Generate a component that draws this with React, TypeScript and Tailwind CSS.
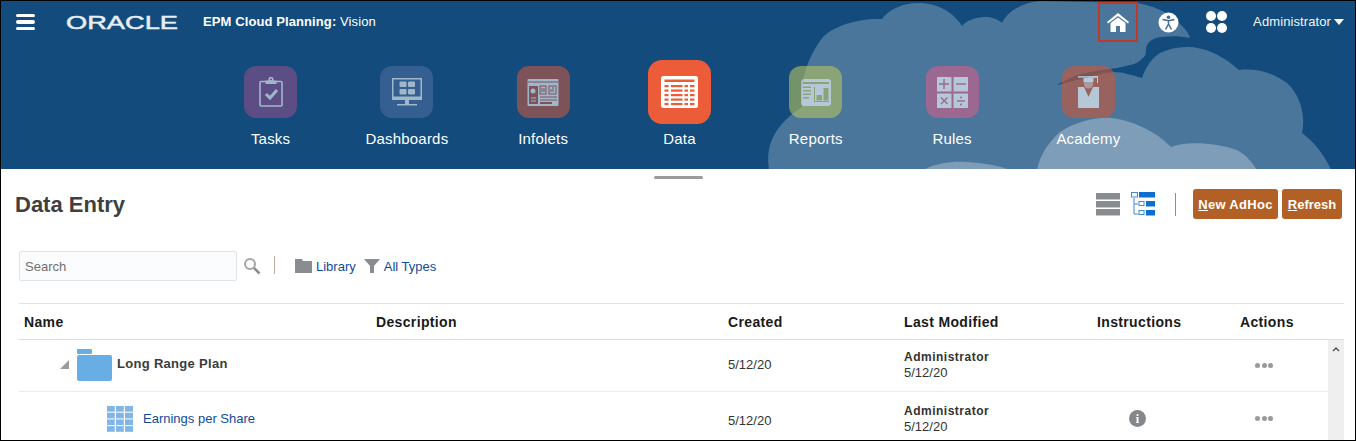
import React from 'react';

const FONT = 'font-["Liberation_Sans",Arial,sans-serif]';

function Clouds() {
  return (
    <svg className="absolute inset-0" width="1354" height="168" viewBox="1 1 1354 168" aria-hidden="true">
      <path
        fill="#4a769c"
        d="M769 170C766 150 770 128 802 107C800 85 805 60 823 37C835 25 860 18 882 19C888 10 902 3 918 3C935 3 952 10 962 26C968 18 990 12 1002 23C1008 10 1025 2 1040 1L1137 3C1150 5 1170 12 1180 24C1185 29 1189 33 1190 38C1180 36 1170 36 1161 37C1152 38 1146 43 1146 50C1146 54 1145 56 1144 57C1140 61 1136 64 1130 65C1125 66 1122 67 1117 68C1100 70 1088 72 1077 75C1070 78 1062 82 1057 85C1065 83 1072 81 1082 79C1092 76 1103 73 1113 72C1122 72 1132 75 1142 78C1146 66 1152 58 1160 53C1168 49 1177 47 1187 47C1202 47 1220 53 1239 70C1255 68 1272 72 1287 83C1300 95 1306 115 1302 133C1312 140 1325 155 1331 170Z"
      />
      <path
        fill="#7d9db8"
        d="M1037 170C1040 155 1048 143 1060 132C1075 122 1095 117 1111 118C1130 120 1155 130 1171 147C1185 141 1215 142 1237 150C1246 155 1252 162 1257 170Z"
      />
      <path fill="#7d9db8" d="M923 170C935 164 950 161 967 162C985 163 1000 166 1010 170Z" />
    </svg>
  );
}

function TasksIcon() {
  return (
    <svg width="24" height="30" viewBox="0 0 24 30" fill="none" stroke="#fff" strokeWidth="1.6">
      <rect x="1" y="4.500" width="22" height="24.500" rx="1" />
      <circle cx="12" cy="2.500" r="1.800" />
      <rect x="6.500" y="3.500" width="11" height="3.500" fill="#fff" stroke="none" />
      <path d="M7 17l4 4 7-8" strokeWidth="3" />
    </svg>
  );
}

function DashboardsIcon() {
  return (
    <svg width="32" height="29" viewBox="0 0 32 29" fill="#fff">
      <path d="M1 0h30v22H1zM2.500 1.500v17h27v-17z" fillRule="evenodd" />
      <rect x="8.500" y="3.500" width="7" height="5.500" rx="1" />
      <rect x="17" y="3.500" width="7" height="5.500" rx="1" />
      <rect x="8.500" y="11" width="7" height="5.500" rx="1" />
      <rect x="17" y="11" width="7" height="5.500" rx="1" />
      <rect x="14" y="22" width="4" height="4" />
      <rect x="6" y="26" width="20" height="1.500" />
    </svg>
  );
}

function InfoletsIcon() {
  const cut = '#c45643';
  return (
    <svg width="32" height="27" viewBox="0 0 32 27">
      <rect x="0.500" y="0" width="31" height="27" rx="1" fill="#fff" />
      <rect x="0.500" y="2.500" width="31" height="1" fill={cut} />
      <rect x="2" y="7" width="9" height="18" fill={cut} />
      <rect x="13" y="7" width="6" height="8" fill="none" stroke={cut} />
      <rect x="22" y="7" width="7" height="8" fill="none" stroke={cut} />
      <path d="M14 10h4M14 12h4" stroke={cut} />
      <path d="M24 13v-3M26 13v-5" stroke={cut} />
      <circle cx="6" cy="12" r="2.500" fill="#fff" />
      <path d="M4 19h5M4 22h5" stroke="#fff" />
      <path d="M13 18h17M13 21h17" stroke={cut} />
      <path d="M13 24h12" stroke={cut} strokeWidth="2" />
    </svg>
  );
}

function DataIcon() {
  return (
    <svg width="37" height="32" viewBox="0 0 37 32">
      <rect width="37" height="32" rx="2.500" fill="#fff" />
      <g fill="#ec5c39">
        <rect x="3.500" y="3.500" width="30" height="2.500" />
        {[9, 13.500, 18, 22.500, 27].map((y) => (
          <React.Fragment key={y}>
            <rect x="3.500" y={y} width="4" height="2.200" />
            <rect x="10" y={y} width="11.500" height="2.200" />
            <rect x="23.500" y={y} width="3.500" height="2.200" />
            <rect x="29" y={y} width="4.500" height="2.200" />
          </React.Fragment>
        ))}
      </g>
    </svg>
  );
}

function ReportsIcon() {
  return (
    <svg width="30" height="27" viewBox="0 0 30 27">
      <rect width="30" height="27" rx="3" fill="#fff" />
      <g fill="#b6c35f">
        <rect x="2" y="3" width="26" height="2" />
        <rect x="2" y="7.500" width="8" height="1.500" />
        <rect x="2" y="11" width="8" height="1.500" />
        <rect x="2" y="14.500" width="8" height="1.500" />
        <rect x="2" y="18" width="6" height="1.500" />
        <rect x="13" y="8" width="1" height="15" />
        <rect x="13" y="22" width="15" height="1" />
        <rect x="15.500" y="16" width="5.500" height="5.500" />
        <rect x="22.500" y="9" width="5" height="12.500" />
      </g>
    </svg>
  );
}

function RulesIcon() {
  const cut = '#cf5f89';
  return (
    <svg width="31" height="31" viewBox="0 0 31 31">
      <g fill="#fff">
        <rect width="14.500" height="14.500" />
        <rect x="16.500" width="14.500" height="14.500" />
        <rect y="16.500" width="14.500" height="14.500" />
        <rect x="16.500" y="16.500" width="14.500" height="14.500" />
      </g>
      <g stroke={cut} strokeWidth="1.400" fill={cut}>
        <path d="M2 7h10M7 2v10" />
        <path d="M19 7h10" />
        <path d="M4 20.500l6.500 6.500M10.500 20.500l-6.500 6.500" />
        <path d="M20 24h8" />
        <circle cx="24" cy="20.500" r="0.400" />
        <circle cx="24" cy="27.500" r="0.400" />
      </g>
    </svg>
  );
}

function AcademyIcon() {
  return (
    <svg width="21" height="32" viewBox="0 0 21 32">
      <rect x="0" y="0" width="20" height="1.800" fill="#fff" />
      <rect x="19" y="1" width="1" height="6" fill="#fff" />
      <path d="M5.500 1.800h10V6h-10Z" fill="#fff" />
      <path d="M6 6h9v2a4.500 4.500 0 0 1-9 0Z" fill="#fff" opacity="0.55" />
      <path d="M0 11h6l4.500 10L15 11h6v21H0Z" fill="#fff" />
    </svg>
  );
}

const NAV = [
  { label: 'Tasks', tile: 'bg-[#8e4e8b]', icon: <TasksIcon /> },
  { label: 'Dashboards', tile: 'bg-[#4c6c9f]', icon: <DashboardsIcon /> },
  { label: 'Infolets', tile: 'bg-[#c45643]', icon: <InfoletsIcon /> },
  { label: 'Data', tile: 'bg-[#ec5c39]', icon: <DataIcon />, active: true },
  { label: 'Reports', tile: 'bg-[#b6c35f]', icon: <ReportsIcon /> },
  { label: 'Rules', tile: 'bg-[#cf5f89]', icon: <RulesIcon /> },
  { label: 'Academy', tile: 'bg-[#cd5837]', icon: <AcademyIcon /> },
];

function NavItem({ label, tile, icon, active }: { label: string; tile: string; icon: React.ReactNode; active?: boolean }) {
  return (
    <div className="w-[136.3px] flex flex-col items-center">
      <div className="h-[64px] flex items-center justify-center">
        <div
          className={`flex items-center justify-center ${tile} ${
            active ? 'w-[63px] h-[64px] rounded-[14px]' : 'w-[53px] h-[52px] rounded-[12px] opacity-60'
          }`}
        >
          {icon}
        </div>
      </div>
      <div className="mt-[6px] text-[15px] leading-[18px] tracking-[0.2px] text-white">{label}</div>
    </div>
  );
}

function TopBar() {
  return (
    <div className="relative h-[42px] flex items-center text-white">
      <div className="ml-[15px] w-[19px] flex flex-col gap-[3px]">
        <div className="h-[3.5px] bg-white rounded-sm" />
        <div className="h-[3.5px] bg-white rounded-sm" />
        <div className="h-[3.5px] bg-white rounded-sm" />
      </div>
      <svg className="ml-[31px]" width="114" height="18" viewBox="0 0 114 18" aria-label="ORACLE">
        <text
          x="0"
          y="15.500"
          textLength="112"
          lengthAdjust="spacingAndGlyphs"
          fill="#e8eef3"
          stroke="#e8eef3"
          strokeWidth="0.5"
          fontFamily="Liberation Sans, Arial, sans-serif"
          fontSize="19"
        >
          ORACLE
        </text>
      </svg>
      <div className="ml-[23px] text-[13px] tracking-[0.1px]">
        <span className="font-bold">EPM Cloud Planning:</span> Vision
      </div>
      <div className="ml-auto flex items-center">
        <div className="w-[40px] h-[40px] border-2 border-[#c0392b] flex items-center justify-center">
          <svg width="22" height="19" viewBox="0 0 22 19" fill="#fff">
            <path d="M11 0L22 9l-1 1.500L11 3 1 10.500 0 9Z" />
            <path d="M3.500 10L11 4.500 18.500 10V19H13v-6H9v6H3.500Z" />
          </svg>
        </div>
        <svg className="ml-[20px]" width="21" height="21" viewBox="0 0 21 21">
          <circle cx="10.500" cy="10.500" r="10" fill="#fff" />
          <circle cx="10.500" cy="5.200" r="1.800" fill="#3f6d94" />
          <path
            d="M4.500 7.500l6 1.200 6-1.200M10.500 8.700v4M10.500 12l-3 5.500M10.500 12l3 5.500"
            stroke="#3f6d94"
            strokeWidth="1.500"
            fill="none"
          />
        </svg>
        <div className="ml-[27px] grid grid-cols-2 gap-x-[1.5px] gap-y-[2px]">
          <div className="w-[10px] h-[10px] rounded-full bg-white" />
          <div className="w-[10px] h-[10px] rounded-full bg-white" />
          <div className="w-[10px] h-[10px] rounded-full bg-white" />
          <div className="w-[10px] h-[10px] rounded-full bg-white" />
        </div>
        <div className="ml-[26px] text-[13px] tracking-[0.1px] text-[#f2f5f8]">Administrator</div>
        <div className="ml-[3px] mr-[11px] w-0 h-0 border-x-[5.5px] border-x-transparent border-t-[6px] border-t-white" />
      </div>
    </div>
  );
}

function Header() {
  return (
    <div className="relative h-[168px] shrink-0 bg-[#134c7c] overflow-hidden">
      <Clouds />
      <TopBar />
      <div className="relative flex justify-center pt-[17px] ml-[3px]">
        {NAV.map((n) => (
          <NavItem key={n.label} {...n} />
        ))}
      </div>
    </div>
  );
}

function Toolbar() {
  return (
    <div className="flex items-center shrink-0 h-[70px] mb-[12px] pl-[14px] pr-[13px]">
      <h1 className="text-[22px] font-bold text-[#3f3f3f] leading-none mt-[2px]">Data Entry</h1>
      <div className="ml-auto flex items-center">
        <svg width="24" height="23" viewBox="0 0 24 23" fill="#8a8d90">
          <rect width="24" height="6.500" />
          <rect y="8" width="24" height="6.500" />
          <rect y="16" width="24" height="6.500" />
        </svg>
        <svg className="ml-[11px]" width="24" height="24" viewBox="0 0 24 24">
          <path d="M3 6v16h4M3 12h4" stroke="#3f8ad8" fill="none" />
          <rect x="0.500" y="0.500" width="6" height="4.500" fill="#fff" stroke="#3f8ad8" />
          <rect x="8" y="0" width="16" height="5.500" fill="#0f6fd0" />
          <rect x="8" y="9.500" width="5" height="4" fill="#fff" stroke="#3f8ad8" />
          <rect x="15" y="9" width="9" height="5.500" fill="#0f6fd0" />
          <rect x="8" y="18.500" width="5" height="4" fill="#fff" stroke="#3f8ad8" />
          <rect x="15" y="18" width="9" height="5.500" fill="#0f6fd0" />
        </svg>
        <div className="ml-[20px] w-px h-[23px] bg-[#8a8d90]" />
        <button className="ml-[17px] pt-[1px] h-[30px] w-[85px] rounded-[3px] bg-[#b26025] text-white text-[13px] font-bold tracking-[0.3px]">
          <span className="underline">N</span>ew AdHoc
        </button>
        <button className="ml-[4px] pt-[1px] h-[30px] w-[60px] rounded-[3px] bg-[#b26025] text-white text-[13px] font-bold">
          <span className="underline">R</span>efresh
        </button>
      </div>
    </div>
  );
}

function SearchBar() {
  return (
    <div className="flex items-center shrink-0 h-[30px] pl-[18px]">
      <div className="w-[218px] h-[30px] flex items-center pl-[5px] pt-[2px] border border-[#dfe4ea] rounded-[2px] bg-[#fbfcfd] text-[13px] text-[#6f6f6f]">
        Search
      </div>
      <svg className="ml-[6px]" width="18" height="18" viewBox="0 0 18 18" fill="none">
        <circle cx="7" cy="7" r="5" stroke="#a3a5a7" strokeWidth="2" />
        <path d="M11 11l5.500 5.500" stroke="#8a8d90" strokeWidth="2.500" />
      </svg>
      <div className="ml-[13px] -mt-[3px] w-px h-[18px] bg-[#b5ad9a]" />
      <svg className="ml-[20px]" width="17" height="14" viewBox="0 0 17 14" fill="#8a8d90">
        <path d="M0 0h7l1 2h9v12H0Z" />
      </svg>
      <span className="ml-[4px] mt-[1px] text-[13px] text-[#0f4c97]">Library</span>
      <svg className="ml-[8px]" width="16" height="14" viewBox="0 0 16 14" fill="#8a8d90">
        <path d="M0 0h16l-6 7v7H6V7Z" />
      </svg>
      <span className="ml-[4px] mt-[1px] text-[13px] text-[#0f4c97]">All Types</span>
    </div>
  );
}

const COLS = 'grid grid-cols-[352px_352px_176px_193px_143px_1fr]';

function MoreDots() {
  return (
    <div className="flex gap-[1.5px] pl-[15px]">
      <div className="w-[5px] h-[5px] rounded-full bg-[#97999b]" />
      <div className="w-[5px] h-[5px] rounded-full bg-[#97999b]" />
      <div className="w-[5px] h-[5px] rounded-full bg-[#97999b]" />
    </div>
  );
}

function Modified({ className }: { className: string }) {
  return (
    <div className={`text-[13px] leading-[16px] text-[#333] ${className}`}>
      <div className="text-[12px] font-bold tracking-[0.5px]">Administrator</div>
      <div>5/12/20</div>
    </div>
  );
}

function FileTable() {
  return (
    <div className="shrink-0 mt-[22px] ml-[18px] w-[1325px] border-t border-[#dde3ea]">
      <div className={`${COLS} h-[36px] items-center pl-[5px] pt-[2px] text-[14px] font-bold tracking-[0.35px] text-[#1a1a1a] border-b border-[#d5dde6]`}>
        <div>Name</div>
        <div>Description</div>
        <div>Created</div>
        <div>Last Modified</div>
        <div>Instructions</div>
        <div>Actions</div>
      </div>
      <div className="flex">
        <div className="flex-1">
          <div className={`${COLS} h-[52px] items-center pl-[5px] border-b border-[#e8ebef]`}>
            <div className="flex items-center">
              <div className="ml-[36px] -mt-[3px] w-0 h-0 border-l-[9px] border-l-transparent border-b-[9px] border-b-[#9a9c9e]" />
              <svg className="ml-[8px] -mt-[1px]" width="35" height="32" viewBox="0 0 35 32" fill="#68ade4">
                <rect width="15" height="5" rx="1" />
                <rect y="6" width="35" height="26" rx="2" />
              </svg>
              <span className="ml-[5px] -mt-[3px] text-[13px] font-bold tracking-[0.3px] text-[#3c3c3c]">Long Range Plan</span>
            </div>
            <div />
            <div className="-mt-[2px] text-[13px] text-[#333]">5/12/20</div>
            <Modified className="-mt-[2px]" />
            <div />
            <MoreDots />
          </div>
          <div className={`${COLS} h-[49px] items-start pt-[14px] pl-[5px]`}>
            <div className="flex items-center">
              <svg className="ml-[83px]" width="26" height="26" viewBox="0 0 26 26" fill="#7fb6e6">
                {[0, 6.700, 13.400, 20.100].map((y) => (
                  <React.Fragment key={y}>
                    <rect x="0" y={y} width="7.800" height="5.700" />
                    <rect x="9" y={y} width="7.800" height="5.700" />
                    <rect x="18" y={y} width="8" height="5.700" />
                  </React.Fragment>
                ))}
              </svg>
              <span className="ml-[10px] text-[13px] text-[#0f4c97]">Earnings per Share</span>
            </div>
            <div />
            <div className="pt-[5px] text-[13px] text-[#333]">5/12/20</div>
            <Modified className="-mt-[3px]" />
            <div className="pl-[32px] pt-[4px]">
              <div className="w-[17px] h-[17px] rounded-full bg-[#85888b] flex items-center justify-center text-white text-[12px] font-bold font-['Liberation_Serif',serif]">
                i
              </div>
            </div>
            <div className="pt-[10px]">
              <MoreDots />
            </div>
          </div>
        </div>
        <div className="w-[16px] bg-[#efefef] pt-[6px] flex justify-center">
          <svg width="8" height="6" viewBox="0 0 8 6" fill="none" stroke="#555" strokeWidth="1.500">
            <path d="M1 5l3-3 3 3" />
          </svg>
        </div>
      </div>
    </div>
  );
}

export default function App() {
  return (
    <div className={`${FONT} w-[1356px] h-[441px] border border-black overflow-hidden flex flex-col bg-white`}>
      <Header />
      <div className="relative flex justify-center h-0">
        <div className="mt-[7px] w-[49px] h-[3px] rounded-full bg-[#9b9b9b]" />
      </div>
      <Toolbar />
      <SearchBar />
      <FileTable />
    </div>
  );
}
